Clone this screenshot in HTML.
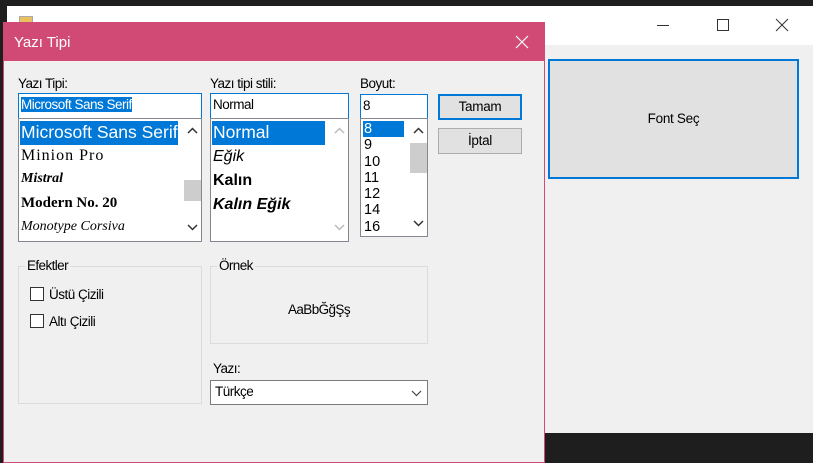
<!DOCTYPE html>
<html><head><meta charset="utf-8"><style>
*{box-sizing:border-box;margin:0;padding:0}
body{width:813px;height:463px;background:#1e1e1e;position:relative;overflow:hidden;font-family:"Liberation Sans",sans-serif;font-size:13.5px;color:#000}
.a{position:absolute}
.lbl{font-size:13.5px;letter-spacing:-0.5px}
.inp{background:#fff;border:1px solid #0078d7;padding:3px 2px;font-size:13.5px;letter-spacing:-0.5px;white-space:nowrap}
.lst{background:#fff;border:1px solid #828790;overflow:hidden}
.sb{position:absolute;right:0;top:0;bottom:0;width:17px;background:#fff}
.btn{background:#e1e1e1;border:1px solid #adadad;text-align:center;font-size:13.5px;letter-spacing:-0.3px}
.grp{border:1px solid #dcdcdc}
.gt{position:absolute;top:-9px;left:6px;background:#f0f0f0;padding:0 2px;letter-spacing:-0.6px}
.cb{position:absolute;width:14px;height:14px;border:1px solid #333;background:#fff}
svg{position:absolute;overflow:visible}
</style></head><body>
<div class="a" style="left:7px;top:6px;width:806px;height:427px;background:#f0f0f0"></div>
<div class="a" style="left:7px;top:6px;width:806px;height:39px;background:#fff"></div>
<div class="a" style="left:19px;top:16px;width:14px;height:12px;background:#e8c060;border:1px solid #aaa"></div>
<div class="a" style="left:657px;top:25px;width:12px;height:1px;background:#333"></div>
<div class="a" style="left:717px;top:19px;width:12px;height:12px;border:1px solid #333"></div>
<svg style="left:776px;top:19px" width="12" height="12"><path d="M0 0L12 12M12 0L0 12" stroke="#333" stroke-width="1"/></svg>
<div class="a" style="left:548px;top:59px;width:251px;height:120px;background:#e1e1e1;border:2px solid #0078d7;text-align:center;line-height:116px;letter-spacing:-0.3px">Font Seç</div>
<div class="a" style="left:0;top:433px;width:813px;height:30px;background:#1e1e1e"></div>

<div class="a" style="left:3px;top:22px;width:542px;height:441px;background:#f0f0f0;border:1px solid #d04a75">
<div class="a" style="left:0;top:0;width:540px;height:38px;background:#d04a75;color:#fff;font-size:15px;line-height:40px;padding-left:10px">Yazı Tipi</div>
</div>
<svg style="left:516px;top:36px" width="12" height="12"><path d="M0 0L12 12M12 0L0 12" stroke="#fff" stroke-width="1.2"/></svg>

<div class="a lbl" style="left:18px;top:76px">Yazı Tipi:</div>
<div class="a inp" style="left:18px;top:93px;width:184px;height:26px"><span style="background:#0078d7;color:#fff">Microsoft Sans Serif</span></div>
<div class="a lst" style="left:18px;top:118px;width:184px;height:124px">
 <div class="a" style="left:1px;top:2px;width:158px;height:24px;background:#0078d7"></div>
 <div class="a" style="left:2px;top:3px;color:#fff;font-size:17.5px;white-space:nowrap;width:157px;overflow:hidden">Microsoft Sans Serif</div>
 <div class="a" style="left:2px;top:28px;font-family:'Liberation Serif',serif;font-size:16px;letter-spacing:1px">Minion Pro</div>
 <div class="a" style="left:2px;top:52px;font-family:'Liberation Serif',serif;font-style:italic;font-size:14px;font-weight:bold">Mistral</div>
 <div class="a" style="left:2px;top:76px;font-family:'Liberation Serif',serif;font-weight:bold;font-size:15px">Modern No. 20</div>
 <div class="a" style="left:2px;top:100px;font-family:'Liberation Serif',serif;font-style:italic;font-size:14px">Monotype Corsiva</div>
 <div class="sb">
  <svg style="left:4px;top:9px" width="9" height="5"><path d="M0 5L4.5 0.5L9 5" stroke="#333" stroke-width="1.5" fill="none"/></svg>
  <div class="a" style="left:0;top:61px;width:17px;height:21px;background:#cdcdcd"></div>
  <svg style="left:4px;top:106px" width="9" height="5"><path d="M0 0L4.5 4.5L9 0" stroke="#333" stroke-width="1.5" fill="none"/></svg>
 </div>
</div>

<div class="a lbl" style="left:210px;top:76px">Yazı tipi stili:</div>
<div class="a inp" style="left:210px;top:93px;width:139px;height:26px">Normal</div>
<div class="a lst" style="left:210px;top:118px;width:139px;height:124px">
 <div class="a" style="left:1px;top:2px;width:113px;height:24px;background:#0078d7"></div>
 <div class="a" style="left:2px;top:3px;color:#fff;font-size:17.5px">Normal</div>
 <div class="a" style="left:2px;top:29px;font-size:16px;font-style:italic">Eğik</div>
 <div class="a" style="left:2px;top:53px;font-size:16px;font-weight:bold">Kalın</div>
 <div class="a" style="left:2px;top:77px;font-size:16px;font-weight:bold;font-style:italic">Kalın Eğik</div>
 <div class="sb">
  <svg style="left:4px;top:9px" width="9" height="5"><path d="M0 5L4.5 0.5L9 5" stroke="#bbb" stroke-width="1.5" fill="none"/></svg>
  <svg style="left:4px;top:106px" width="9" height="5"><path d="M0 0L4.5 4.5L9 0" stroke="#bbb" stroke-width="1.5" fill="none"/></svg>
 </div>
</div>

<div class="a lbl" style="left:360px;top:76px">Boyut:</div>
<div class="a inp" style="left:360px;top:94px;width:68px;height:25px">8</div>
<div class="a lst" style="left:360px;top:118px;width:68px;height:119px">
 <div class="a" style="left:2px;top:2px;width:41px;height:16px;background:#0078d7"></div>
 <div class="a" style="left:3px;top:2px;font-size:14.5px;line-height:16.3px"><span style="color:#fff">8</span><br>9<br>10<br>11<br>12<br>14<br>16</div>
 <div class="sb">
  <svg style="left:4px;top:9px" width="9" height="5"><path d="M0 5L4.5 0.5L9 5" stroke="#333" stroke-width="1.5" fill="none"/></svg>
  <div class="a" style="left:0;top:24px;width:17px;height:30px;background:#cdcdcd"></div>
  <svg style="left:4px;top:102px" width="9" height="5"><path d="M0 0L4.5 4.5L9 0" stroke="#333" stroke-width="1.5" fill="none"/></svg>
 </div>
</div>

<div class="a btn" style="left:438px;top:94px;width:84px;height:26px;border:2px solid #0078d7;line-height:22px">Tamam</div>
<div class="a btn" style="left:438px;top:128px;width:84px;height:26px;line-height:24px">İptal</div>

<div class="a grp" style="left:18px;top:266px;width:184px;height:138px"><div class="gt">Efektler</div></div>
<div class="cb" style="left:30px;top:287px"></div><div class="a lbl" style="left:49px;top:287px">Üstü Çizili</div>
<div class="cb" style="left:30px;top:314px"></div><div class="a lbl" style="left:49px;top:314px">Altı Çizili</div>

<div class="a grp" style="left:210px;top:266px;width:218px;height:78px"><div class="gt">Örnek</div>
<div class="a" style="left:0;width:216px;top:35px;text-align:center;letter-spacing:-0.6px">AaBbĞğŞş</div></div>

<div class="a lbl" style="left:213px;top:361px">Yazı:</div>
<div class="a" style="left:210px;top:380px;width:218px;height:25px;background:#fff;border:1px solid #7a7a7a;padding:3px 4px;letter-spacing:-0.5px">Türkçe
<svg style="left:201px;top:10px" width="9" height="5"><path d="M0 0L4.5 4.5L9 0" stroke="#444" stroke-width="1.2" fill="none"/></svg></div>
</body></html>
